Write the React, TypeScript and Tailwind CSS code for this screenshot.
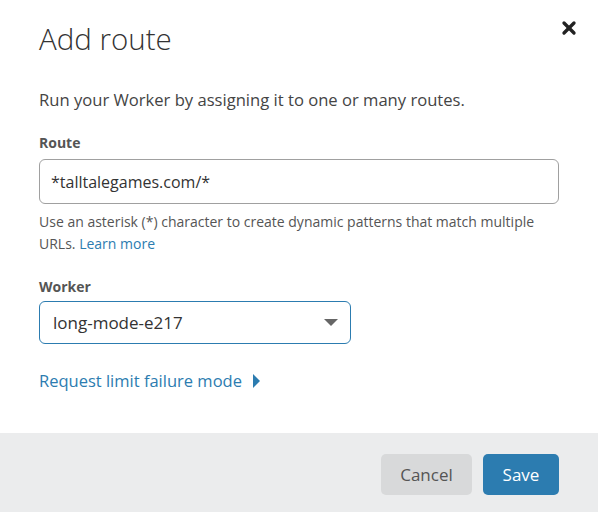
import { X } from 'lucide-react';

export default function App() {
  return (
    <div
      className="w-[598px] h-[512px] bg-white flex flex-col text-[#333]"
      style={{ fontFamily: '"Open Sans", "Noto Sans", sans-serif' }}
    >
      <div className="flex-1 px-[39px] pt-[19px]">
        {/* Header */}
        <div className="flex items-start justify-between">
          <h1 className="text-[29.5px] font-light leading-[40px] text-[#333]">Add route</h1>
          <button className="-mt-[1px] -mr-[20px] text-[#222]">
            <X className="w-[20px] h-[20px]" strokeWidth={4} />
          </button>
        </div>

        <p className="mt-[30px] text-[16.6px] leading-[22px] text-[#444]">
          Run your Worker by assigning it to one or many routes.
        </p>

        {/* Route */}
        <label className="block mt-[22px] text-[14px] font-bold text-[#555] leading-[20px]">Route</label>
        <div className="mt-[6px] h-[45px] w-[520px] border border-[#a0a0a0] rounded-[6px] flex items-center px-[11px] text-[16px] text-[#333]">
          *talltalegames.com/*
        </div>
        <p className="mt-[7px] text-[14px] leading-[22px] text-[#555]">
          Use an asterisk (*) character to create dynamic patterns that match multiple URLs.{' '}
          <span className="text-[#2c7cb0]">Learn more</span>
        </p>

        {/* Worker */}
        <label className="block mt-[22px] text-[14px] font-bold text-[#555] leading-[20px]">Worker</label>
        <div className="mt-[4px] h-[43px] w-[312px] border border-[#2c7cb0] rounded-[6px] flex items-center justify-between pl-[13px] pr-[12px] text-[17px] text-[#333]">
          <span>long-mode-e217</span>
          <span className="w-0 h-0 border-l-[7px] border-r-[7px] border-t-[7px] border-l-transparent border-r-transparent border-t-[#666]" />
        </div>

        <button className="mt-[25px] flex items-center gap-[11px] text-[16.5px] text-[#2c7cb0] leading-[24px]">
          Request limit failure mode
          <span className="w-0 h-0 border-t-[7px] border-b-[7px] border-l-[7px] border-t-transparent border-b-transparent border-l-[#2c7cb0]" />
        </button>
      </div>

      {/* Footer */}
      <div className="h-[79px] bg-[#ebeced] flex items-start justify-end gap-[11px] pr-[39px] pt-[21px]">
        <button className="h-[41px] w-[91px] rounded-[5px] bg-[#d8d9da] text-[17px] text-[#555]">Cancel</button>
        <button className="h-[41px] w-[76px] rounded-[5px] bg-[#2c7cb0] text-[17px] text-white">Save</button>
      </div>
    </div>
  );
}
